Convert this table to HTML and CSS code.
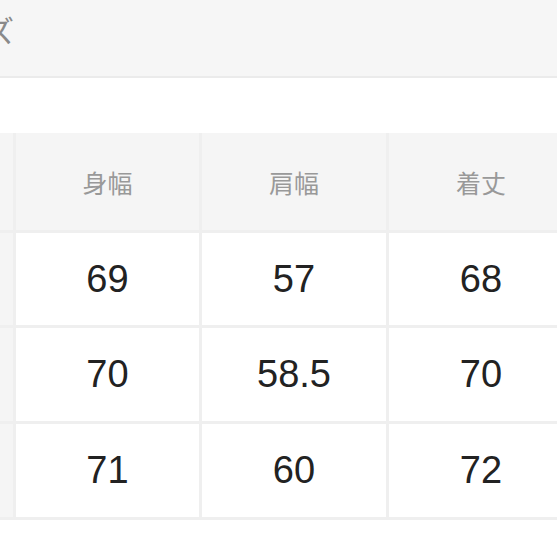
FILE: index.html
```html
<!DOCTYPE html>
<html lang="ja">
<head>
<meta charset="utf-8">
<link rel="stylesheet" href="styles.css">
</head>
<body>
<div class="page">
  <div class="topbar"><span class="title">サイズ</span></div>
  <div class="spacer"></div>
  <div class="table">
    <div class="cell side"></div>
    <div class="cell head">身幅</div>
    <div class="cell head">肩幅</div>
    <div class="cell head">着丈</div>

    <div class="cell side"></div>
    <div class="cell val">69</div>
    <div class="cell val">57</div>
    <div class="cell val">68</div>

    <div class="cell side"></div>
    <div class="cell val">70</div>
    <div class="cell val">58.5</div>
    <div class="cell val">70</div>

    <div class="cell side"></div>
    <div class="cell val">71</div>
    <div class="cell val">60</div>
    <div class="cell val">72</div>
  </div>
</div>
</body>
</html>
```
FILE: styles.css
```css
html, body {
  margin: 0;
  padding: 0;
  background: #ffffff;
}
.page {
  width: 557px;
  height: 557px;
  overflow: hidden;
}
.topbar {
  height: 58px;
  padding-bottom: 18px;
  background: #f6f6f6;
  border-bottom: 2px solid #ebebeb;
  display: flex;
  align-items: center;
  overflow: hidden;
}
.title {
  font-family: "Noto Sans CJK JP", sans-serif;
  font-size: 30px;
  color: #8a8a8a;
  margin-left: -75px;
  white-space: nowrap;
  line-height: 1;
}
.spacer {
  height: 55px;
}
.table {
  display: grid;
  grid-template-columns: 13px 183px 184px 184px;
  grid-template-rows: 97px 92px 93px 93px;
  gap: 3px;
  background: #efefef;
  padding-bottom: 3px;
  width: 573px;
}
.cell {
  display: flex;
  align-items: center;
  justify-content: center;
  background: #ffffff;
}
.side {
  background: #f5f5f5;
}
.head {
  background: #f5f5f5;
  font-family: "Noto Sans CJK JP", sans-serif;
  font-size: 25px;
  color: #999999;
}
.val {
  font-family: "Liberation Sans", Arial, sans-serif;
  font-size: 38px;
  color: #222222;
}
```
